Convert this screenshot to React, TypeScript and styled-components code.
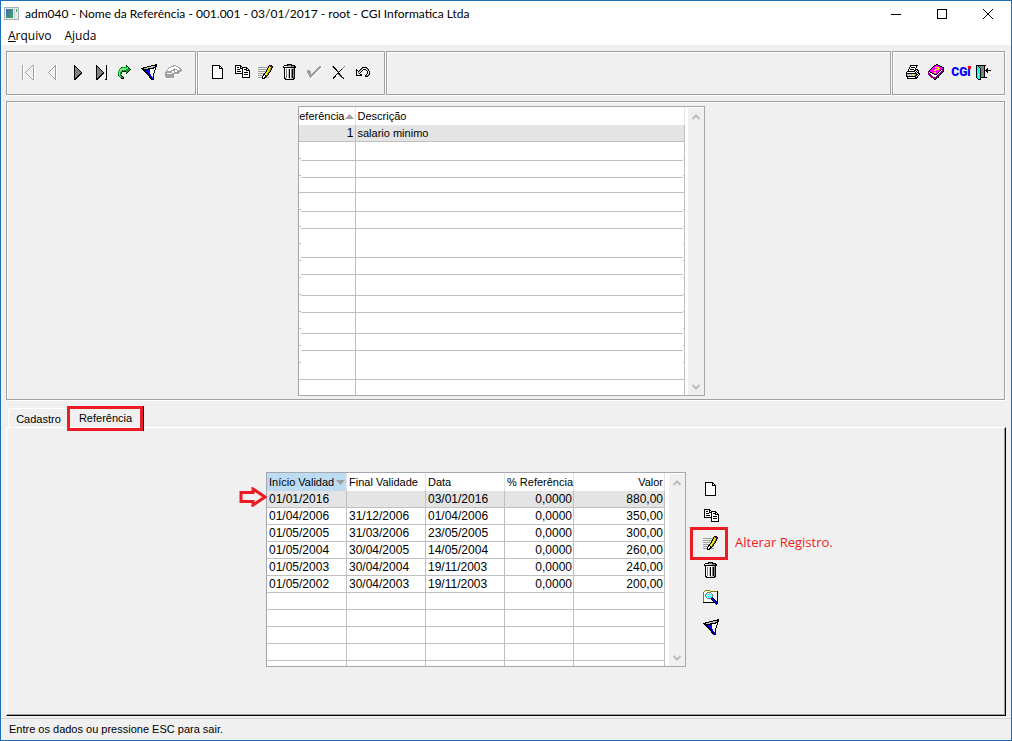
import React from "react";
import styled, { createGlobalStyle, css } from "styled-components";

const GlobalStyle = createGlobalStyle`
  *, *::before, *::after { box-sizing: border-box; }
  body { margin: 0; background: #f0f0f0; }
  button { font: inherit; color: inherit; }
`;

const face = "#f0f0f0";
const line = "#c0c0c0";
const shade = "#a0a0a0";
const red = "#ed1c24";
const systemFont = `"Liberation Sans", Arial, sans-serif`;
const menuFont = `"Open Sans", "Noto Sans", sans-serif`;
const titleFont = `Lato, "Open Sans", sans-serif`;

/* ---------- pixel drawings ---------- */

const palette: Record<string, string> = {
  k: "#000000",
  w: "#ffffff",
  g: "#808080",
  l: "#c0c0c0",
  s: "#a0a0a0",
  G: "#00a020",
  L: "#70e880",
  b: "#0000ff",
  y: "#ffff00",
  Y: "#d8d020",
  o: "#808000",
  p: "#800080",
  m: "#ff00ff",
  c: "#00ffff",
};

type Art = { x: number; y: number; rows: string[] };

function Pixels({ art }: { art: Art }) {
  const rects: React.ReactElement[] = [];
  art.rows.forEach((row, r) => {
    let c = 0;
    while (c < row.length) {
      const ch = row[c];
      let end = c + 1;
      while (end < row.length && row[end] === ch) end++;
      if (palette[ch]) {
        rects.push(<rect key={`${r}-${c}`} x={art.x + c} y={art.y + r} width={end - c} height={1} fill={palette[ch]} />);
      }
      c = end;
    }
  });
  return (
    <svg width="24" height="24" viewBox="0 0 24 24" shapeRendering="crispEdges" aria-hidden="true">
      {rects}
    </svg>
  );
}

const icons: Record<string, Art> = {
  first: { x: 6, y: 5, rows: [
    "sw........ssw", "sw.......swsw", "sw......sw.sw", "sw.....sw..sw", "sw....sw...sw", "sw...sw....sw", "sw..sw.....sw",
    "sw.sw......sw", "sw..sw.....sw", "sw...sw....sw", "sw....sw...sw", "sw.....sw..sw", "sw......sw.sw", "sw.......swsw", "sw........ssw"] },
  prev: { x: 7, y: 5, rows: [
    "........sw", ".......ssw", "......swsw", ".....sw.sw", "....sw..sw", "...sw...sw", "..sw....sw", ".sw.....sw",
    "..sw....sw", "...sw...sw", "....sw..sw", ".....sw.sw", "......swsw", ".......ssw", "........sw"] },
  next: { x: 10, y: 5, rows: [
    "k.......", "kk......", "kgk.....", "kggk....", "kgggk...", "kggggk..", "kgggggk.", "kggggggk",
    "kgggggkk", "kggggkk.", "kgggkk..", "kggkk...", "kgkk....", "kkk.....", "kk......"] },
  last: { x: 8, y: 5, rows: [
    "k.........k", "kk........k", "kgk.......k", "kggk......k", "kgggk.....k", "kggggk....k", "kgggggk...k", "kggggggk..k",
    "kgggggkk..k", "kggggkk...k", "kgggkk....k", "kggkk.....k", "kgkk......k", "kkk.......k", "kk.......kk"] },
  go: { x: 6, y: 5, rows: [
    "........k....", "........Gk...", "...kGGGGGLk..", "..GLLLLLLLGk.", ".GLLLLLLGGGGk", ".GLLGGGGGGGk.", "GLLGkkkkGGk..",
    "GLGk....Gk...", "GLGk....k....", "GLG..........", "kLGk.........", ".GLGk........", "..GGGk.......", "...kkk......."] },
  filter: { x: 5, y: 4, rows: [
    "..............kk", "..........kkkkkk", "......kkkkllllkk", "..kkkkllllllkkk.", "kkkllllkkkkkkwk.", ".kkkkkkkbwwwwwk.", "..kkbbbbbwwwwk..",
    "...kkbbbbwwwwk..", "....kkbbbwwwwk..", ".....kbbbwwwk...", "......kkbbwwk...", ".......kkbwwk...", "........kbbwk...", "........kkbbk...", ".........kbbk...", "..........kkk..."] },
  erase: { x: 5, y: 5, rows: [
    "........sss......", "......ssswwss....", "....sswwwwwwwss..", "...swwwwwswwwwss.", "..swwwwwsssswwwss", ".swwwwsssswwsssss", ".sssssswwswwssssw",
    "ssssssswwssssssw.", "sswwwwwsssssssw..", "ssssssssswwwww...", "sssssssssw.......", "sssssssssw.......", ".ssssssssw.......", "..wwwwwww........"] },
  fresh: { x: 7, y: 5, rows: [
    "kkkkkkkk...", "kwwwwwwkk..", "kwwwwwwkwk.", "kwwwwwwkkkk", "kwwwwwwwwwk", "kwwwwwwwwwk", "kwwwwwwwwwk",
    "kwwwwwwwwwk", "kwwwwwwwwwk", "kwwwwwwwwwk", "kwwwwwwwwwk", "kwwwwwwwwwk", "kwwwwwwwwwk", "kkkkkkkkkkk"] },
  copy: { x: 6, y: 5, rows: [
    "kkkkkk.........", "kwwwwkk........", "kwkkwkwkkkkk...", "kwwwwkkkwwwkk..", "kwkkkwwkwkkkwk.", "kwwwwwwkwwwkkkk", "kwkkkkwkwwwwwwk",
    "kwwwwwwkwkkkkwk", "kkkkkkkkwwwwwwk", ".......kwkkkkwk", ".......kwwwwwwk", ".......kwwwwwwk", ".......kkkkkkkk"] },
  edit: { x: 5, y: 5, rows: [
    "...........kkk.", "..........kYppk", "sssssssssskYypk", ".........kYyok.", "ssssssssskYyok.", "........kYyok..", "sssssssskYyok..",
    ".......kYyok...", "sssssskYyok....", ".....kkyyok....", "ssssskwkok.....", "....kwwkk......", "sssskwkksss....", "....kkk........"] },
  trash: { x: 6, y: 4, rows: [
    "....kkkkk....", ".kkkkgggkkkk.", "kwwwllllgggkk", "kkkkkkkkkkkkk", ".kwwwwwwllgk.", ".kwgwlkwgkgk.", ".kwgwlkwgkgk.", ".kwgwlkwgkgk.",
    ".kwgwlkwgkgk.", ".kwgwlkwgkgk.", ".kwgwlkwgkgk.", ".kwgwlkwgkgk.", ".kwgwlkwgkgk.", ".kwgwlkwgkgk.", ".kkwwwllllkk.", "..kkkkkkkkk.."] },
  confirm: { x: 6, y: 6, rows: [
    "............ss.", "...........sssw", "..........sssw.", ".........sssw..", "sss.....sssw...", "ssss...sssw....", "ssss..sssw.....",
    ".sss.sssw......", ".ssssssw.......", "..ssssw........", "..sssw.........", "...sw.........."] },
  cancel: { x: 7, y: 6, rows: [
    "gk..........g", ".kk........g.", "..kk......g..", "...kk....k...", "....kg..k....", ".....kgk.....", "......k......",
    ".....kkk.....", "....k.gkg....", "...k...gkg...", "..kk....gk...", ".kk......gkg.", ".k.........k."] },
  undo: { x: 7, y: 7, rows: [
    "......kkkkk....", ".....kg...gk...", "k...kg.kkk.gk..", "kk.kg.k...k.k..", "k.kg.k.....k.k.", "k.g.k......k.k.", "k..k.......k.k.",
    "k...kk....k.gk.", "kkkkkk...kggk..", ".........kkk..."] },
  print: { x: 5, y: 5, rows: [
    "....kkkkkkkk..", "....kwwwwwk...", "...kwkkkkwk...", "...kwwwwwk....", "..kwkkkkwkkk..", "..kwwwwwkkwkk.", ".kkkkkkkkwkwk.",
    "kwwwwwwwwkwkk.", "kkkkkkkkkkkwkk", "klllllyyllkkwk", "kllllllllkkwk.", "kkkkkkkkkkwk..", ".kwwwwwwwkkk..", ".kkkkkkkkkk..."] },
  help: { x: 3, y: 4, rows: [
    "........kk......", "......kkmmkk....", ".....kmmmmmmkk..", "....kmmyyyymmmkk", "...kmmmmmmyymmmk", "..kmmmmyyyymmkpk", ".kmmmmyymmmmkwpk",
    "pkmmmmmmmmmkwppk", "pwkkmmyymmkwppk.", "ppwwkkmmmkwppk..", "pppwwwkkkwppk...", ".pppwwwwwppk....", "..pppwwwppk.....", "...pppppppk.....", ".....pppk.......", "......kk........"] },
  exit: { x: 3, y: 5, rows: [
    "kkkkkkkkkk.....", "kckgggggk......", "kcckggggk......", "kccckgggk..k...", "kccckgggk.kk...", "kccckgggkkkkkkk", "kccckgggk.kk...",
    "kccckgggk..k...", "kccckgggk......", "kcwckgggk......", "kccckgggk......", "kccckgggk......", "kccckkkkkkk....", ".kcck..........", "..kkk.........."] },
  search: { x: 5, y: 5, rows: [
    "..ooooo........", ".owwwwwoooooook", "owwwggggwwwwwwk", "owwgcwcwgwwwwwk", "owgcwcwcwgwwwwk", "owgwcwcwcgwwwwk", "owgcwcwcwgwwwwk",
    "owwgwcwcgkwwwwk", "owwwggggbbkwwwk", "owwwwwwwkbbkwwk", "owwwwwwwwkbbkwk", "owwwwwwwwwkbbkk", "kkkkkkkkkkkkbbk", "............kbk", ".............k."] },
};

/* ---------- window frame ---------- */

const Window = styled.div`
  display: flex;
  flex-direction: column;
  min-height: 100vh;
  border: 1px solid #1a6fb8;
  background: ${face};
  color: #000;
  font: 11px/14px ${systemFont};
`;

const TitleBar = styled.header`
  display: flex;
  align-items: center;
  height: 25px;
  padding-left: 3px;
  background: #fff;
  font: 12px/16px ${titleFont};
`;

const Title = styled.h1`
  flex: 1;
  margin: 0 0 0 6px;
  font: inherit;
  white-space: nowrap;
`;

const WindowButton = styled.button`
  display: grid;
  place-items: center;
  width: 46px;
  height: 24px;
  padding: 0;
  border: 0;
  background: none;
`;

const MenuBar = styled.nav`
  display: flex;
  gap: 13px;
  height: 19px;
  padding-left: 7px;
  background: #fff;
  font: 12px/18px ${menuFont};
`;

const MenuItem = styled.button`
  padding: 0;
  border: 0;
  background: none;
`;

const etched = css`
  border: 1px solid ${shade};
  box-shadow: 1px 1px 0 #fff, inset 1px 1px 0 #fff;
`;

const Body = styled.main`
  display: flex;
  flex: 1;
  flex-direction: column;
  padding: 6px 6px 2px 5px;
`;

const Toolbar = styled.div`
  display: flex;
  gap: 1px;
  height: 44px;
`;

const ToolGroup = styled.div<{ $grow?: boolean; $start?: number; $end?: number }>`
  ${etched}
  display: flex;
  flex: ${(p) => (p.$grow ? "1" : "none")};
  align-items: center;
  padding: 0 ${(p) => p.$end ?? 8}px 2px ${(p) => p.$start ?? 8}px;
`;

const IconButton = styled.button`
  position: relative;
  display: grid;
  place-items: center;
  width: 24px;
  height: 24px;
  padding: 0;
  border: 0;
  background: none;

  svg { display: block; }
`;

const Logo = styled.span`
  position: relative;
  color: #0000ff;
  font: 900 12px/12px Roboto, sans-serif;

  &::after {
    content: "";
    position: absolute;
    top: 0;
    right: 0;
    width: 3px;
    height: 3px;
    background: #ff0000;
  }
`;

const BrowsePanel = styled.section`
  ${etched}
  display: flex;
  justify-content: center;
  margin-top: 6px;
  padding: 4px 9px 3px 0;
`;

/* ---------- grids ---------- */

const GridBox = styled.div<{ $height: number }>`
  position: relative;
  display: flex;
  flex: none;
  height: ${(p) => p.$height}px;
  border: 1px solid #a6a6ae;
  background: #fff;
`;

const TableClip = styled.div<{ $ticks?: boolean }>`
  position: relative;
  overflow: hidden;

  ${(p) =>
    p.$ticks &&
    css`
      &::before,
      &::after {
        content: "";
        position: absolute;
        top: 35px;
        bottom: 16px;
        left: 0;
        width: 2px;
        background: repeating-linear-gradient(#fff 0 16px, ${line} 16px 17px);
      }
      &::after {
        right: 1px;
        left: auto;
        width: 1px;
      }
    `}
`;

const Table = styled.table<{ $width: number }>`
  width: ${(p) => p.$width}px;
  table-layout: fixed;
  border-collapse: separate;
  border-spacing: 0;
`;

const HeadCell = styled.th<{ $end?: boolean; $active?: boolean }>`
  height: 18px;
  padding: 0 1px 0 2px;
  border-right: 1px solid #e4e4e4;
  background: ${(p) => (p.$active ? "#bcdcf4" : "#fff")};
  font-weight: normal;
  text-align: ${(p) => (p.$end ? "right" : "left")};
  white-space: nowrap;
`;

const Row = styled.tr<{ $height?: number; $selected?: boolean }>`
  height: ${(p) => p.$height ?? 17}px;
  background: ${(p) => (p.$selected ? "#e4e4e4" : "#fff")};
`;

const Cell = styled.td<{ $end?: boolean; $digits?: boolean }>`
  padding: 0 1px 0 2px;
  border-right: 1px solid ${line};
  border-bottom: 1px solid ${line};
  font-size: ${(p) => (p.$digits ? 12 : 11)}px;
  line-height: 14px;
  text-align: ${(p) => (p.$end ? "right" : "left")};
`;

const SortLabel = styled.span<{ $end?: boolean }>`
  display: flex;
  align-items: center;
  justify-content: ${(p) => (p.$end ? "flex-end" : "space-between")};

  svg { flex: none; }
`;

const ScrollBar = styled.div<{ $gap: number }>`
  display: flex;
  flex-direction: column;
  justify-content: space-between;
  width: 16px;
  margin: 1px 0 0 ${(p) => p.$gap}px;
  background: ${face};
`;

const ScrollButton = styled.button`
  display: grid;
  place-items: center;
  height: 17px;
  padding: 0;
  border: 0;
  background: none;
`;

/* ---------- tab sheet ---------- */

const Tabs = styled.div`
  display: flex;
  height: 26px;
  margin-top: 1px;
  padding: 5px 0 0 2px;
`;

const Tab = styled.button<{ $current?: boolean }>`
  position: relative;
  width: ${(p) => (p.$current ? 74 : 60)}px;
  margin-top: ${(p) => (p.$current ? 0 : 2)}px;
  padding: 1px 0 0;
  border: solid #fff;
  border-width: 1px 0 0 1px;
  border-radius: 3px 0 0 0;
  background: ${face};
`;

const TabMark = styled.span`
  position: absolute;
  z-index: 1;
  top: -1px;
  right: -1px;
  bottom: -4px;
  left: -2px;
  border: 3px solid ${red};
  box-shadow: 1px 0 0 #000;
`;

const Sheet = styled.section`
  display: flex;
  flex: 1;
  align-items: flex-start;
  justify-content: center;
  margin-right: -1px;
  padding: 44px 24px 0 0;
  border: solid;
  border-width: 1px;
  border-color: #fff #000 #000 #fff;
  box-shadow: inset -1px -1px 0 ${shade};
`;

const SideTools = styled.div`
  display: flex;
  flex-direction: column;
  gap: 3px;
  margin: 5px 0 0 12px;
`;

const FilterSlot = styled.div`
  padding-top: 3px;
`;

const ButtonMark = styled.span`
  position: absolute;
  top: -4px;
  left: -8px;
  width: 38px;
  height: 33px;
  border: 3px solid ${red};
`;

const Note = styled.span`
  position: absolute;
  top: 1px;
  left: 37px;
  color: ${red};
  font: 13px/20px ${menuFont};
  white-space: nowrap;
`;

const Pointer = styled.svg`
  position: absolute;
  top: 14px;
  left: -28px;
`;

const StatusBar = styled.footer`
  height: 22px;
  padding: 3px 8px;
  border-top: 1px solid #d4d4d4;
`;

/* ---------- pieces ---------- */

function Tool({ name, label }: { name: string; label: string }) {
  return (
    <IconButton type="button" aria-label={label}>
      <Pixels art={icons[name]} />
    </IconButton>
  );
}

function Scroller({ gap }: { gap: number }) {
  return (
    <ScrollBar $gap={gap}>
      <ScrollButton type="button" aria-label="Rolar para cima">
        <svg width="8" height="6" viewBox="0 0 8 6"><path d="M0.5 5 4 1.5 7.5 5" fill="none" stroke="#bdbdbd" strokeWidth="2" /></svg>
      </ScrollButton>
      <ScrollButton type="button" aria-label="Rolar para baixo">
        <svg width="8" height="6" viewBox="0 0 8 6"><path d="M0.5 1 4 4.5 7.5 1" fill="none" stroke="#bdbdbd" strokeWidth="2" /></svg>
      </ScrollButton>
    </ScrollBar>
  );
}

const navTools = [["first", "Primeiro"], ["prev", "Anterior"], ["next", "Próximo"], ["last", "Último"], ["go", "Ir para"], ["filter", "Filtrar"], ["erase", "Limpar filtro"]];
const editTools = [["fresh", "Novo"], ["copy", "Copiar"], ["edit", "Alterar"], ["trash", "Excluir"], ["confirm", "Confirmar"], ["cancel", "Cancelar"], ["undo", "Desfazer"]];
const emptyHeights = [19, 17, 15, 19, 17, 29, 17, 21, 17, 21, 17, 29, 17];
const periods = [
  ["01/01/2016", "", "03/01/2016", "0,0000", "880,00"],
  ["01/04/2006", "31/12/2006", "01/04/2006", "0,0000", "350,00"],
  ["01/05/2005", "31/03/2006", "23/05/2005", "0,0000", "300,00"],
  ["01/05/2004", "30/04/2005", "14/05/2004", "0,0000", "260,00"],
  ["01/05/2003", "30/04/2004", "19/11/2003", "0,0000", "240,00"],
  ["01/05/2002", "30/04/2003", "19/11/2003", "0,0000", "200,00"],
];
const blankRow = ["", "", "", "", ""];
const periodRows = [...periods, blankRow, blankRow, blankRow, blankRow, blankRow];

export default function App() {
  return (
    <>
      <GlobalStyle />
      <Window>
        <TitleBar>
          <svg width="15" height="13" viewBox="0 0 15 13" aria-hidden="true">
            <defs>
              <linearGradient id="pane" x1="0" y1="0" x2="1" y2="1">
                <stop offset="0" stopColor="#3d6fb0" />
                <stop offset="1" stopColor="#3fa463" />
              </linearGradient>
            </defs>
            <rect x="0.5" y="0.5" width="14" height="12" fill="#e8ecee" stroke="#a8b0b4" />
            <rect x="2" y="2" width="7" height="9" fill="url(#pane)" />
            <rect x="10" y="2" width="1" height="9" fill="#c4ccd0" />
            <rect x="12" y="2" width="1" height="3" fill="#3fa463" />
          </svg>
          <Title>adm040 - Nome da Referência - 001.001 - 03/01/2017 - root - CGI Informatica Ltda</Title>
          <WindowButton type="button" aria-label="Minimizar">
            <svg width="10" height="10"><path d="M0 5.5H10" stroke="#000" /></svg>
          </WindowButton>
          <WindowButton type="button" aria-label="Maximizar">
            <svg width="10" height="10"><rect x="0.5" y="0.5" width="9" height="9" fill="none" stroke="#000" /></svg>
          </WindowButton>
          <WindowButton type="button" aria-label="Fechar">
            <svg width="10" height="10"><path d="M0 0 10 10M10 0 0 10" stroke="#000" /></svg>
          </WindowButton>
        </TitleBar>
        <MenuBar>
          <MenuItem type="button"><u>A</u>rquivo</MenuItem>
          <MenuItem type="button">Ajuda</MenuItem>
        </MenuBar>
        <Body>
          <Toolbar>
            <ToolGroup $start={9} $end={11}>
              {navTools.map(([name, label]) => <Tool key={name} name={name} label={label} />)}
            </ToolGroup>
            <ToolGroup $start={7} $end={11}>
              {editTools.map(([name, label]) => <Tool key={name} name={name} label={label} />)}
            </ToolGroup>
            <ToolGroup $grow />
            <ToolGroup $end={7}>
              <Tool name="print" label="Imprimir" />
              <Tool name="help" label="Ajuda" />
              <IconButton type="button" aria-label="CGi"><Logo>CGi</Logo></IconButton>
              <Tool name="exit" label="Sair" />
            </ToolGroup>
          </Toolbar>

          <BrowsePanel>
            <GridBox $height={290}>
              <TableClip $ticks>
                <Table $width={386}>
                  <colgroup>
                    <col style={{ width: 57 }} />
                    <col />
                  </colgroup>
                  <thead>
                    <tr>
                      <HeadCell $end>
                        <SortLabel $end>
                          <span>eferência</span>
                          <svg width="9" height="5"><path d="M0 5 4.5 0 9 5Z" fill="#a0a0a0" /></svg>
                        </SortLabel>
                      </HeadCell>
                      <HeadCell>Descrição</HeadCell>
                    </tr>
                  </thead>
                  <tbody>
                    <Row $selected>
                      <Cell $end $digits>1</Cell>
                      <Cell>salario minimo</Cell>
                    </Row>
                    {emptyHeights.map((height, i) => (
                      <Row key={i} $height={height}><Cell /><Cell /></Row>
                    ))}
                  </tbody>
                </Table>
              </TableClip>
              <Scroller gap={3} />
            </GridBox>
          </BrowsePanel>

          <Tabs role="tablist">
            <Tab type="button" role="tab">Cadastro</Tab>
            <Tab type="button" role="tab" aria-selected="true" $current>Referência<TabMark /></Tab>
          </Tabs>
          <Sheet>
            <GridBox $height={195}>
              <TableClip>
                <Table $width={398}>
                  <colgroup>
                    <col style={{ width: 80 }} />
                    <col style={{ width: 79 }} />
                    <col style={{ width: 79 }} />
                    <col style={{ width: 69 }} />
                    <col />
                  </colgroup>
                  <thead>
                    <tr>
                      <HeadCell $active>
                        <SortLabel>
                          <span>Início Validad</span>
                          <svg width="9" height="5"><path d="M0 0 4.5 5 9 0Z" fill="#a0a0a0" /></svg>
                        </SortLabel>
                      </HeadCell>
                      <HeadCell>Final Validade</HeadCell>
                      <HeadCell>Data</HeadCell>
                      <HeadCell $end>% Referência</HeadCell>
                      <HeadCell $end>Valor</HeadCell>
                    </tr>
                  </thead>
                  <tbody>
                    {periodRows.map((cells, r) => (
                      <Row key={r} $selected={r === 0}>
                        {cells.map((text, c) => <Cell key={c} $digits $end={c > 2}>{text}</Cell>)}
                      </Row>
                    ))}
                  </tbody>
                </Table>
              </TableClip>
              <Scroller gap={4} />
              <Pointer width="28" height="20" viewBox="0 0 28 20" aria-hidden="true">
                <path d="M2 5.5H14V2L26 10 14 18V14.5H2Z" fill="none" stroke={red} strokeWidth="3" />
              </Pointer>
            </GridBox>
            <SideTools>
              <Tool name="fresh" label="Novo registro" />
              <Tool name="copy" label="Copiar registro" />
              <IconButton type="button" aria-label="Alterar registro">
                <Pixels art={icons.edit} />
                <ButtonMark />
                <Note>Alterar Registro.</Note>
              </IconButton>
              <Tool name="trash" label="Excluir registro" />
              <Tool name="search" label="Consultar registro" />
              <FilterSlot><Tool name="filter" label="Filtrar registros" /></FilterSlot>
            </SideTools>
          </Sheet>
        </Body>
        <StatusBar>Entre os dados ou pressione ESC para sair.</StatusBar>
      </Window>
    </>
  );
}
